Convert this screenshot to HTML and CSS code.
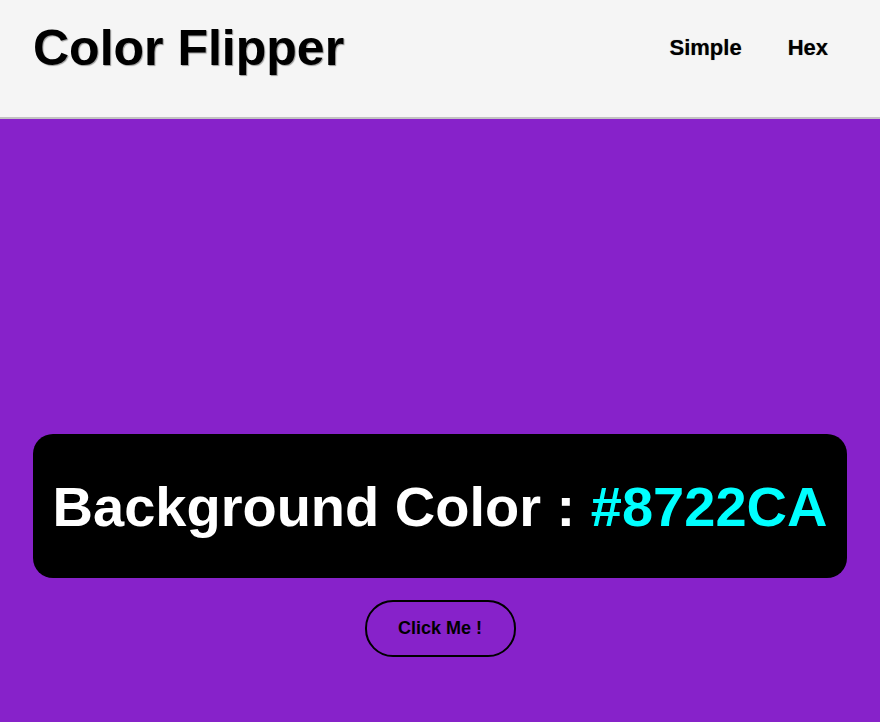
FILE: index.html
```html
<!DOCTYPE html>
<html lang="en">
<head>
<meta charset="utf-8">
<title>Color Flipper</title>
<link rel="stylesheet" href="styles.css">
</head>
<body>
<header class="topbar">
  <h1 class="brand">Color Flipper</h1>
  <nav class="nav">
    <a class="nav-link" href="#">Simple</a>
    <a class="nav-link" href="#">Hex</a>
  </nav>
</header>
<main class="stage">
  <div class="panel">
    <h2 class="panel-text">Background Color : <span class="hex">#8722CA</span></h2>
  </div>
  <button class="flip-btn" type="button">Click Me !</button>
</main>
</body>
</html>
```
FILE: styles.css
```css
* { box-sizing: border-box; }
html, body { margin: 0; padding: 0; }
body {
  font-family: "Liberation Sans", Arial, sans-serif;
  background: #8722CA;
  min-height: 722px;
}
.topbar {
  height: 119px;
  background: #f5f5f5;
  border-bottom: 2px solid #c2c2c2;
  display: flex;
  justify-content: space-between;
  align-items: flex-start;
  padding: 20px 52px 0 33px;
}
.brand {
  margin: 0;
  font-size: 50px;
  font-weight: 700;
  line-height: 56px;
  color: #000;
  text-shadow: 1px 1px 1px #9a9a9a;
}
.nav {
  display: flex;
  gap: 46px;
  margin-top: 15px;
}
.nav-link {
  font-size: 22px;
  font-weight: 700;
  line-height: 25px;
  color: #000;
  text-decoration: none;
  text-shadow: 0 0 1px #888;
}
.stage {
  display: flex;
  flex-direction: column;
  align-items: center;
  padding: 315px 33px 0;
}
.panel {
  width: 100%;
  height: 144px;
  background: #000;
  border-radius: 20px;
  display: flex;
  align-items: center;
  justify-content: center;
}
.panel-text {
  margin: 0;
  font-size: 56px;
  font-weight: 700;
  color: #fff;
  line-height: 64px;
  padding-top: 2px;
}
.hex { color: #00ffff; }
.flip-btn {
  margin-top: 22px;
  width: 151px;
  height: 57px;
  border: 2px solid #000;
  border-radius: 28px;
  background: transparent;
  font-family: "Liberation Sans", Arial, sans-serif;
  font-size: 18px;
  font-weight: 700;
  color: #000;
  cursor: pointer;
}
```
